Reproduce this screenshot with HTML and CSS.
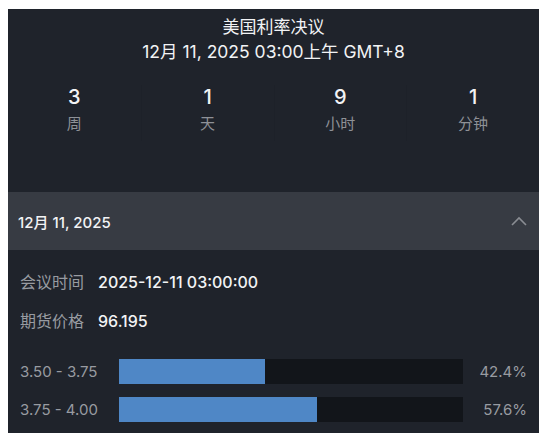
FILE: index.html
```html
<!DOCTYPE html>
<html lang="zh">
<head>
<meta charset="utf-8">
<link rel="stylesheet" href="styles.css">
</head>
<body>
<div class="panel">
  <div class="head">
    <div class="title">美国利率决议</div>
    <div class="subtitle">12月 11, 2025 03:00上午 GMT+8</div>
  </div>
  <div class="countdown">
    <div class="unit"><div class="num">3</div><div class="lbl">周</div></div>
    <div class="unit"><div class="num">1</div><div class="lbl">天</div></div>
    <div class="unit"><div class="num">9</div><div class="lbl">小时</div></div>
    <div class="unit"><div class="num">1</div><div class="lbl">分钟</div></div>
  </div>
  <div class="acc-head">
    <span class="acc-title">12月 11, 2025</span>
    <svg class="chev" width="16" height="10" viewBox="0 0 16 10"><path d="M1 9 L8 2 L15 9" fill="none" stroke="#8a8d93" stroke-width="1.6"/></svg>
  </div>
  <div class="acc-body">
    <div class="info"><span class="key">会议时间</span><span class="val">2025-12-11 03:00:00</span></div>
    <div class="info"><span class="key">期货价格</span><span class="val">96.195</span></div>
    <div class="bars">
      <div class="range">3.50 - 3.75</div>
      <div class="track"><div class="fill" style="width:42.4%"></div></div>
      <div class="pct">42.4%</div>
      <div class="range">3.75 - 4.00</div>
      <div class="track"><div class="fill" style="width:57.6%"></div></div>
      <div class="pct">57.6%</div>
    </div>
  </div>
</div>
</body>
</html>
```

FILE: styles.css
```css
body {
  margin: 8px;
  background: #ffffff;
  font-family: "Inter", "Noto Sans CJK SC", sans-serif;
}
.panel {
  width: 531px;
  height: 424px;
  margin-top: 1px;
  background: #1f232b;
  color: #f2f3f5;
  overflow: hidden;
}
.head {
  padding-top: 6px;
  text-align: center;
}
.title {
  font-size: 17px;
  line-height: 24px;
}
.subtitle {
  font-size: 17.5px;
  line-height: 26px;
}
.countdown {
  display: grid;
  grid-template-columns: repeat(4, 1fr);
  margin-top: 20px;
  height: 56px;
}
.unit {
  display: flex;
  flex-direction: column;
  align-items: center;
  gap: 4px;
}
.unit + .unit {
  border-left: 1px solid #1d2129;
}
.num {
  font-size: 20px;
  line-height: 24px;
  font-weight: 500;
}
.lbl {
  font-size: 15px;
  line-height: 22px;
  color: #8e9197;
}
.acc-head {
  margin-top: 51px;
  height: 58px;
  background: #373b43;
  display: flex;
  align-items: center;
  justify-content: space-between;
  padding: 0 12px 0 10px;
}
.acc-title {
  font-size: 15px;
  font-weight: 500;
}
.chev {
  display: block;
}
.acc-body {
  padding: 20px 12px 0 12px;
}
.info {
  display: flex;
  gap: 14px;
  line-height: 24px;
  font-size: 16px;
}
.info + .info {
  margin-top: 15px;
}
.key {
  color: #989ba1;
}
.val {
  color: #f2f3f5;
  font-weight: 500;
}
.bars {
  margin-top: 26px;
  display: grid;
  grid-template-columns: 99px 344px 1fr;
  row-gap: 13px;
  align-items: center;
}
.range {
  font-size: 15px;
  color: #989ba1;
}
.track {
  height: 25px;
  background: #12151a;
}
.fill {
  height: 100%;
  background: #4f87c6;
}
.pct {
  font-size: 15px;
  color: #989ba1;
  text-align: right;
}
```
